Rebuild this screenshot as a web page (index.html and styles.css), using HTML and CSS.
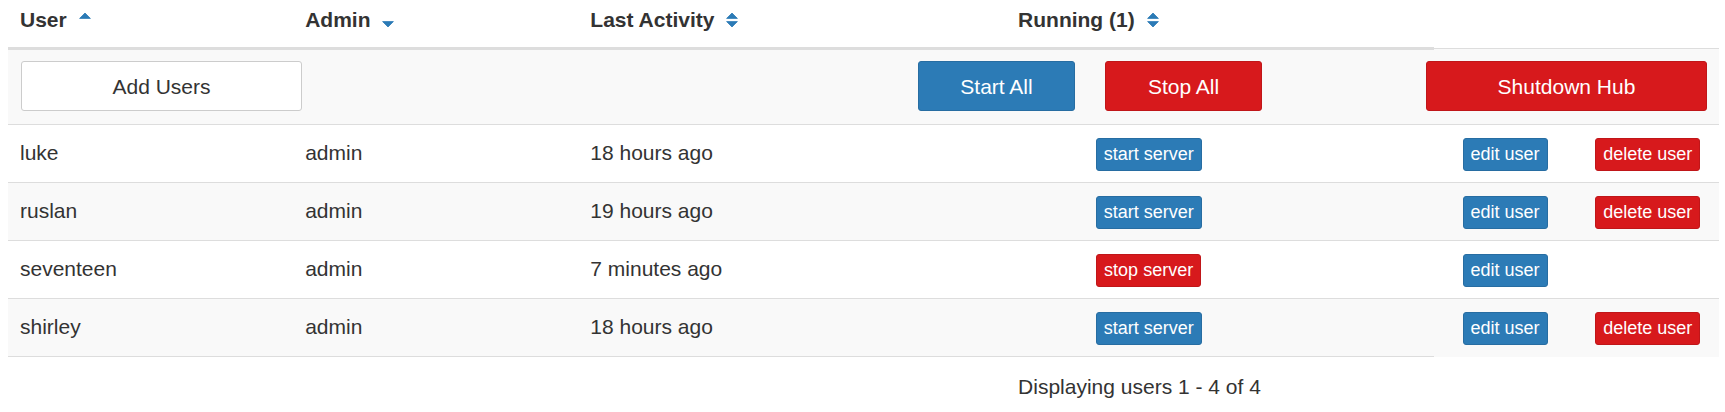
FILE: index.html
```html
<!DOCTYPE html>
<html lang="en">
<head>
<meta charset="utf-8">
<title>Admin</title>
<link rel="stylesheet" href="styles.css">
</head>
<body>
<table class="users-table">
  <colgroup>
    <col class="c2"><col class="c2"><col class="c3"><col class="c2"><col class="c1"><col class="c1"><col class="c1">
  </colgroup>
  <thead>
    <tr>
      <th>User<svg class="sort" viewBox="0 0 12 16" width="12" height="16"><polygon points="0.6,6.4 6,1 11.4,6.4"/></svg></th>
      <th>Admin<svg class="sort" viewBox="0 0 12 16" width="12" height="16"><polygon points="0.6,9.6 11.4,9.6 6,15"/></svg></th>
      <th>Last Activity<svg class="sort" viewBox="0 0 12 16" width="12" height="16"><polygon points="0.6,6.4 6,1 11.4,6.4"/><polygon points="0.6,9.6 11.4,9.6 6,15"/></svg></th>
      <th colspan="2">Running (1)<svg class="sort" viewBox="0 0 12 16" width="12" height="16"><polygon points="0.6,6.4 6,1 11.4,6.4"/><polygon points="0.6,9.6 11.4,9.6 6,15"/></svg></th>
    </tr>
  </thead>
  <tbody>
    <tr class="odd">
      <td colspan="7" class="actions-cell">
        <div class="actions">
          <a class="btn btn-default btn-add">Add Users</a>
          <a class="btn btn-primary btn-start-all">Start All</a>
          <a class="btn btn-danger btn-stop-all">Stop All</a>
          <a class="btn btn-danger btn-shutdown">Shutdown Hub</a>
        </div>
      </td>
    </tr>
    <tr>
      <td>luke</td><td>admin</td><td>18 hours ago</td>
      <td class="center"><a class="btn-xs btn-primary">start server</a></td>
      <td></td>
      <td class="center"><a class="btn-xs btn-primary">edit user</a></td>
      <td class="center"><a class="btn-xs btn-danger">delete user</a></td>
    </tr>
    <tr class="odd">
      <td>ruslan</td><td>admin</td><td>19 hours ago</td>
      <td class="center"><a class="btn-xs btn-primary">start server</a></td>
      <td></td>
      <td class="center"><a class="btn-xs btn-primary">edit user</a></td>
      <td class="center"><a class="btn-xs btn-danger">delete user</a></td>
    </tr>
    <tr>
      <td>seventeen</td><td>admin</td><td>7 minutes ago</td>
      <td class="center"><a class="btn-xs btn-danger">stop server</a></td>
      <td></td>
      <td class="center"><a class="btn-xs btn-primary">edit user</a></td>
      <td class="center"></td>
    </tr>
    <tr class="odd">
      <td>shirley</td><td>admin</td><td>18 hours ago</td>
      <td class="center"><a class="btn-xs btn-primary">start server</a></td>
      <td></td>
      <td class="center"><a class="btn-xs btn-primary">edit user</a></td>
      <td class="center"><a class="btn-xs btn-danger">delete user</a></td>
    </tr>
  </tbody>
  <tfoot>
    <tr>
      <td colspan="3"></td>
      <td colspan="2">Displaying users 1 - 4 of 4</td>
    </tr>
  </tfoot>
</table>
</body>
</html>
```
FILE: styles.css
```css
html, body {
  background: #fff;
}
body {
  margin: 0 0 0 8px;
  font-family: "Liberation Sans", Arial, sans-serif;
  font-size: 21px;
  line-height: 30px;
  color: #333;
}
.users-table {
  width: 1711px;
  table-layout: fixed;
  border-collapse: collapse;
  border-spacing: 0;
}
.c1 { width: 8.3333%; }
.c2 { width: 16.6667%; }
.c3 { width: 25%; }

.users-table th {
  text-align: left;
  font-weight: bold;
  padding: 5px 12px 12px 12px;
  border-bottom: 3px solid #ddd;
  vertical-align: bottom;
  white-space: nowrap;
}
.sort {
  display: inline-block;
  margin-left: 12px;
  vertical-align: -1px;
  fill: #2c7bb6;
  stroke: #2c7bb6;
  stroke-width: 0.8;
  stroke-linejoin: round;
}
.users-table td {
  padding: 13px 12px 11px 12px;
  border-top: 1px solid #ddd;
  vertical-align: top;
}
.users-table tbody tr.odd {
  background: #f9f9f9;
}
.users-table td.center {
  text-align: center;
}
.users-table td.actions-cell {
  padding: 11px 12px 13px 13px;
}
.users-table tfoot td {
  padding-top: 15px;
}
.actions {
  display: flex;
  align-items: flex-start;
}
.btn {
  display: block;
  box-sizing: border-box;
  height: 50px;
  padding: 10px 12px 8px;
  border: 1px solid transparent;
  border-radius: 3px;
  font-size: 21px;
  line-height: 30px;
  text-align: center;
  white-space: nowrap;
  cursor: pointer;
}
.btn-default {
  background: #fff;
  border-color: #ccc;
  color: #333;
}
.btn-add { width: 281px; }
.btn-start-all { width: 157px; margin-left: 616px; }
.btn-stop-all { width: 157px; margin-left: 30px; }
.btn-shutdown { width: 281px; margin-left: 164px; }

.btn-xs {
  display: inline-block;
  vertical-align: top;
  padding: 2px 7px;
  border: 1px solid transparent;
  border-radius: 3px;
  font-size: 18px;
  line-height: 27px;
  white-space: nowrap;
  cursor: pointer;
}
.btn-primary {
  background: #2c7bb6;
  border-color: #276da2;
  color: #fff;
}
.btn-danger {
  background: #d7191c;
  border-color: #c01619;
  color: #fff;
}
```
